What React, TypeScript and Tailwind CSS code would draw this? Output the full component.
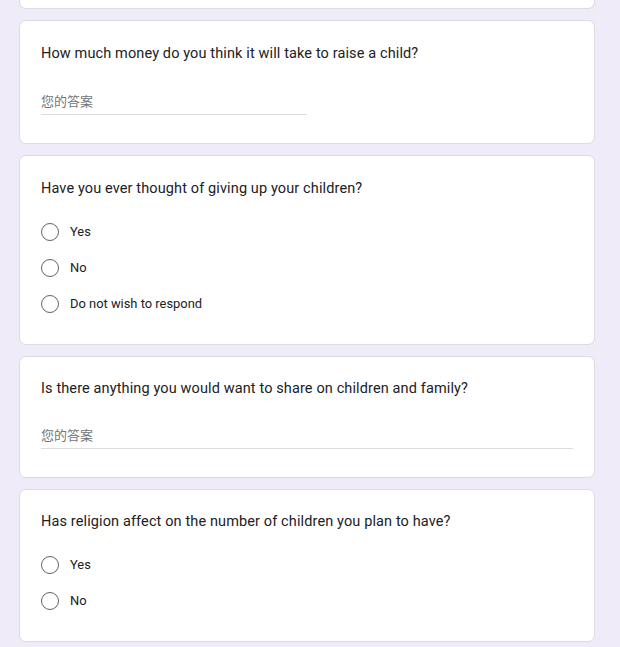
import React from "react";

const font = { fontFamily: "Roboto, 'Noto Sans CJK SC', sans-serif" };

const Card = ({ children, className = "" }: { children?: React.ReactNode; className?: string }) => (
  <div className={`bg-white border border-[#dadce0] rounded-[7px] px-[21px] ${className}`}>{children}</div>
);

const Question = ({ text }: { text: string }) => (
  <div className="text-[14.5px] leading-[22px] text-[#202124] tracking-[0.12px]">{text}</div>
);

const ShortAnswer = ({ width }: { width: string }) => (
  <div className={width}>
    <div className="border-b border-[#dadce0] pb-[2px] text-[13px] leading-[20px] text-[#70757a]">您的答案</div>
  </div>
);

const Radio = ({ label }: { label: string }) => (
  <div className="flex items-center h-[36px]">
    <div className="w-[18px] h-[18px] rounded-full border-[1.5px] border-[#5f6368] shrink-0" />
    <span className="ml-[11px] text-[12.9px] text-[#202124]">{label}</span>
  </div>
);

export default function App() {
  return (
    <div className="min-h-screen w-full bg-[#f0ebf8] overflow-hidden" style={font}>
      <div className="ml-[19px] w-[576px] flex flex-col gap-[11px]">
        <div className="h-[9px] bg-white border border-t-0 border-[#dadce0] rounded-b-[7px]" />

        <Card className="pt-[22px] pb-[28px]">
          <Question text="How much money do you think it will take to raise a child?" />
          <div className="mt-[27px]">
            <ShortAnswer width="w-[266px]" />
          </div>
        </Card>

        <Card className="pt-[22px] pb-[22px]">
          <Question text="Have you ever thought of giving up your children?" />
          <div className="mt-[14px]">
            <Radio label="Yes" />
            <Radio label="No" />
            <Radio label="Do not wish to respond" />
          </div>
        </Card>

        <Card className="pt-[21px] pb-[28px]">
          <Question text="Is there anything you would want to share on children and family?" />
          <div className="mt-[26px]">
            <ShortAnswer width="w-[532px]" />
          </div>
        </Card>

        <Card className="pt-[21px] pb-[22px]">
          <Question text="Has religion affect on the number of children you plan to have?" />
          <div className="mt-[14px]">
            <Radio label="Yes" />
            <Radio label="No" />
          </div>
        </Card>
      </div>
    </div>
  );
}
